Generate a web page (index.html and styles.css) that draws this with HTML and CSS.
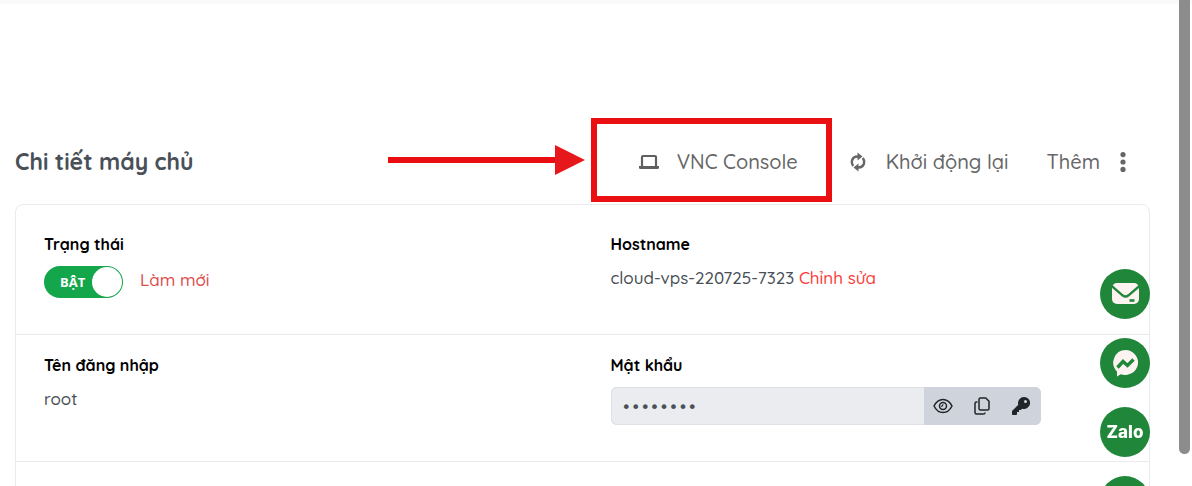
FILE: index.html
```html
<!DOCTYPE html>
<html lang="vi">
<head>
  <meta charset="UTF-8">
  <meta name="viewport" content="width=device-width, initial-scale=1.0">
  <title>Chi tiết máy chủ</title>
  <link rel="stylesheet" href="styles.css">
</head>
<body>

  <div class="topbar"></div>

  <main class="page">
    <header class="page-header">
      <h1>Chi tiết máy chủ</h1>
      <div class="actions">
        <div class="vnc">
          <button type="button" class="action">
            <svg width="22" height="16" viewBox="0 0 22 16" aria-hidden="true">
              <path d="M4 13V3Q4 2 5 2H17Q18 2 18 3V13" fill="none" stroke="#5f5f5f" stroke-width="2.200"/>
              <path d="M1 12h20v1.500q0 1.500-1.500 1.500h-17Q1 15 1 13.500z" fill="#5f5f5f"/>
            </svg>
            VNC Console
          </button>
          <div class="vnc-frame"></div>
          <svg class="vnc-arrow" width="197" height="30" viewBox="0 0 197 30" aria-hidden="true">
            <path d="M0 15h170" stroke="#e90d0f" stroke-width="6"/>
            <path d="M167 0l30 15-30 15z" fill="#e6181b"/>
          </svg>
        </div>
        <button type="button" class="action action-restart">
          <svg width="16" height="20" viewBox="0 0 16 20" aria-hidden="true">
            <path d="M3.200 14C.5 10 2 4.500 7.500 4.500H9M12.800 6C15.500 10 14 15.500 8.500 15.500H7" fill="none" stroke="#666" stroke-width="2.400"/>
            <path d="M7.500 .5l5 4-5 4zM8.500 11.500l-5 4 5 4z" fill="#666"/>
          </svg>
          Khởi động lại
        </button>
        <button type="button" class="action action-more">
          Thêm
          <svg width="8" height="20" viewBox="0 0 8 20" aria-hidden="true">
            <g fill="#666"><circle cx="4" cy="2.600" r="2.600"/><circle cx="4" cy="10" r="2.600"/><circle cx="4" cy="17.400" r="2.600"/></g>
          </svg>
        </button>
      </div>
    </header>

    <section class="card">
      <div class="row">
        <div class="cell">
          <h2>Trạng thái</h2>
          <div class="status">
            <label class="toggle">
              <input type="checkbox" checked>
              <span>BẬT</span>
            </label>
            <a href="#" class="refresh">Làm mới</a>
          </div>
        </div>
        <div class="cell">
          <h2>Hostname</h2>
          <p>cloud-vps-220725-7323 <a href="#">Chỉnh sửa</a></p>
        </div>
      </div>
      <div class="row">
        <div class="cell">
          <h2>Tên đăng nhập</h2>
          <p>root</p>
        </div>
        <div class="cell">
          <h2><label for="password">Mật khẩu</label></h2>
          <div class="password">
            <input type="password" id="password" value="12345678" readonly>
            <button type="button" aria-label="Hiện mật khẩu">
              <svg width="20" height="16" viewBox="0 0 20 16" fill="none" stroke="#212529" stroke-width="1.500" aria-hidden="true">
                <path d="M1 8C3 4 6.200 1.400 10 1.400S17 4 19 8c-2 4-5.200 6.600-9 6.600S3 12 1 8z"/>
                <circle cx="10" cy="8" r="3.500"/>
                <path d="M8 8.300Q9.800 8.400 10 6.200" stroke-width="1.200"/>
              </svg>
            </button>
            <button type="button" aria-label="Sao chép">
              <svg width="16" height="18" viewBox="0 0 16 18" fill="none" stroke="#212529" stroke-width="1.500" stroke-linejoin="round" aria-hidden="true">
                <path d="M6.500 1h5.300L15 4.200v7.300q0 1.500-1.500 1.500h-7Q5 13 5 11.500v-9Q5 1 6.500 1z"/>
                <path d="M3.500 5h-1Q1 5 1 6.500v9Q1 17 2.500 17h6.800Q11 17 11 15.400"/>
              </svg>
            </button>
            <button type="button" aria-label="Đổi mật khẩu">
              <svg width="18" height="18" viewBox="0 0 18 18" aria-hidden="true">
                <path fill="#212529" fill-rule="evenodd" d="M12 0a6 6 0 1 1-1.800 11.700L8.800 13H7v2H5v2.200q0 .8-.8.8H.8Q0 18 0 17.200V14l6.300-6.200A6 6 0 0 1 12 0zm1.500 3a1.500 1.500 0 1 0 0 3 1.500 1.500 0 0 0 0-3z"/>
              </svg>
            </button>
          </div>
        </div>
      </div>
      <div class="row"></div>
    </section>
  </main>

  <!-- Nút liên hệ -->
  <nav class="contacts">
    <a href="#" aria-label="Email">
      <svg width="28" height="22" viewBox="0 0 28 22" aria-hidden="true">
        <rect x="1" y="0" width="27" height="21" rx="5" fill="#fdf3f1"/>
        <path d="M0 2.500l11.500 9.800q3 2.400 6 0L29 2.500" fill="none" stroke="#20873a" stroke-width="2.400"/>
        <path d="M18.500 17.500h5" stroke="#20873a" stroke-width="2.600"/>
      </svg>
    </a>
    <a href="#" aria-label="Messenger">
      <svg width="28" height="28" viewBox="0 0 28 28" aria-hidden="true">
        <path d="M14.500 1a13 12.500 0 1 1-4.700 24.300L6 27.500V22.500A12.600 12.600 0 0 1 14.500 1z" fill="#fdf3f1"/>
        <path d="M6.500 18.500l5.500-6 4.500 4L22.500 10.500" fill="none" stroke="#20873a" stroke-width="3.400"/>
      </svg>
    </a>
    <a href="#">Zalo</a>
    <a href="#" aria-label="Gọi điện"></a>
  </nav>

  <div class="scrollbar"></div>

</body>
</html>
```
FILE: styles.css
```css
* { box-sizing: border-box; }
body {
  margin: 0;
  height: 100vh;
  overflow: hidden;
  background: #fff;
  color: #495057;
  font-family: Quicksand, Inter, "Open Sans", sans-serif;
  font-size: 17px;
  font-weight: 500;
  line-height: 24px;
}
h1, h2, p { margin: 0; }
a { color: #fa3c3c; text-decoration: none; }
button { font: inherit; color: inherit; border: none; background: none; padding: 0; cursor: pointer; }
svg { display: block; flex: none; }

.topbar { height: 4px; background: #fafafa; }
.page { padding: 118px 42px 0 15px; }

/* Tiêu đề và các nút */
.page-header {
  display: flex;
  align-items: center;
  justify-content: space-between;
  padding-right: 23px;
  margin-bottom: 2px;
}
h1 { font-size: 23px; font-weight: 700; line-height: 28px; color: #495057; }
.actions { display: flex; align-items: center; }
.action {
  display: flex;
  align-items: center;
  gap: 17px;
  font-size: 20px;
  line-height: 28px;
  color: #666;
}
.action-restart { gap: 20px; margin: 0 38px 0 18px; }
.action-more { gap: 19px; }

/* Khung đỏ và mũi tên chỉ vào nút VNC */
.vnc { position: relative; padding: 26px 34px 26px 47px; }
.vnc-frame {
  position: absolute;
  inset: -4px 0 0;
  border: 6px solid #ea1012;
  pointer-events: none;
}
.vnc-arrow { position: absolute; right: 100%; top: 23px; margin-right: 6px; }

.card { border: 1px solid #e9ecef; border-radius: 8px; padding-top: 9px; }
.row { display: grid; grid-template-columns: 1fr 1fr; min-height: 80px; }
.row + .row { border-top: 1px solid #e9ecef; }
.cell { padding: 19px 28px 36px; }
h2 {
  margin-bottom: 11px;
  font-size: 16px;
  font-weight: 700;
  line-height: 22px;
  color: #000;
}

.status { display: flex; gap: 17px; }
.refresh { line-height: 28px; color: #dc4c4c; }
.toggle { position: relative; width: 79px; height: 32px; cursor: pointer; }
.toggle input {
  appearance: none;
  width: 100%;
  height: 100%;
  margin: 0;
  display: flex;
  justify-content: flex-end;
  padding: 1px;
  border-radius: 16px;
  background: #14a64b;
}
.toggle input::before {
  content: "";
  width: 30px;
  height: 30px;
  border-radius: 50%;
  background: #fff;
}
.toggle span {
  position: absolute;
  left: 16px;
  top: 4px;
  font-family: "Open Sans", sans-serif;
  font-size: 13px;
  font-weight: 700;
  color: #fff;
}

.password {
  display: flex;
  max-width: 430px;
  height: 38px;
  border-radius: 6px;
  overflow: hidden;
  background: #ced4da;
}
.password input {
  flex: 1;
  min-width: 0;
  padding: 2px 10px 0;
  border: 1px solid #dee2e6;
  border-right: none;
  border-radius: 6px 0 0 6px;
  background: #ebecef;
  color: #495057;
  font-family: "DejaVu Sans", sans-serif;
  font-size: 16px;
}
.password button {
  width: 39px;
  display: flex;
  align-items: center;
  justify-content: center;
  background: #cfd3dc;
}

.contacts {
  position: fixed;
  top: 269px;
  right: 42px;
  display: grid;
  gap: 19px;
}
.contacts a {
  width: 50px;
  height: 50px;
  display: flex;
  align-items: center;
  justify-content: center;
  border-radius: 50%;
  background: #20873a;
  color: #fff;
  font-family: Inter, sans-serif;
  font-size: 17px;
  font-weight: 800;
}

.scrollbar {
  position: fixed;
  top: 0;
  right: 2px;
  width: 11px;
  height: 454px;
  border-radius: 0 0 6px 6px;
  background: #8c8c8c;
}
```
